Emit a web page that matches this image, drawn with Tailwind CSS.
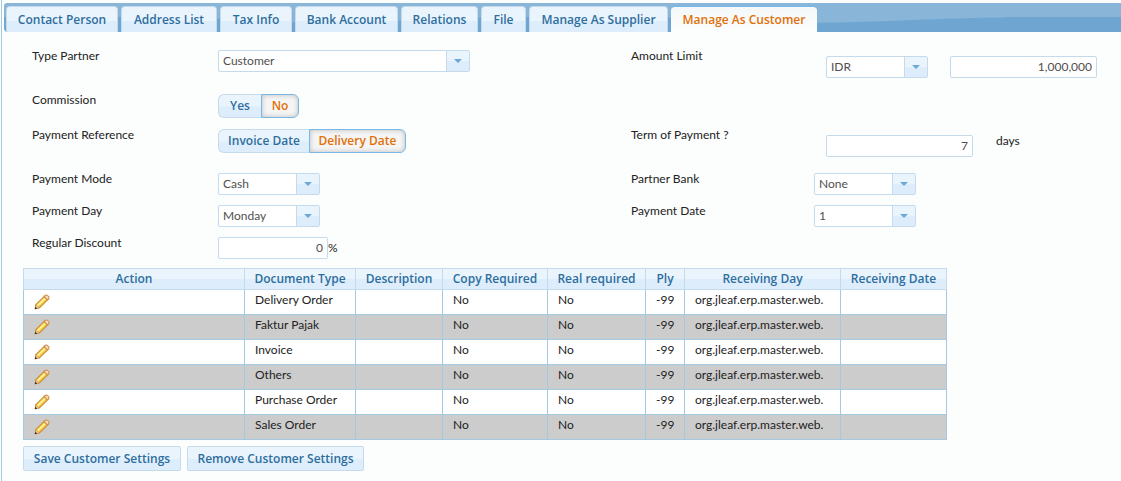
<!DOCTYPE html>
<html lang="en">
<head>
    <meta charset="UTF-8">
    <meta name="viewport" content="width=device-width, initial-scale=1.0">
    <title>Partner - Manage As Customer</title>
    <script src="https://cdn.jsdelivr.net/npm/@tailwindcss/browser@4"></script>
</head>
<body class="bg-[#fcfdfd] pl-px text-[#222222] font-['Lato','Open_Sans',sans-serif] text-xs">
    <!-- Icons -->
    <svg class="hidden" aria-hidden="true">
        <symbol id="pencil" viewBox="0 0 16 16">
            <path d="M.8 15.2L1.2 10.4L10.6 1.2Q12 0 13.4 .8L15.2 2.6Q16 4 14.8 5.4L5.6 14.6Z" fill="#c98a3b"/>
            <path d="M2.3 10.8L10 3.2L12.8 6L5.2 13.6Z" fill="#f3c63a"/>
            <path d="M2.8 11.2L10.3 3.9L11.6 5.2L4.1 12.4Z" fill="#fdf3a0"/>
            <path d="M10.8 2.5L12 1.5Q12.7 1.2 13.4 1.8L14.3 2.7Q15 3.5 14.3 4.3L13.3 5.2Z" fill="#f8d8bc"/>
            <path d="M2 11.3L4.9 13.9L2.2 14.6L1.4 13.8Z" fill="#f0c9a0"/>
            <path d="M.8 15.2L1.1 12.6L3.4 14.8Z" fill="#4a3418"/>
        </symbol>
        <symbol id="caret" viewBox="0 0 8 4">
            <path d="M0 0H8L4 4Z" fill="#6da8d5"/>
        </symbol>
    </svg>

    <div class="min-h-screen border-l border-[#a6c9e2] pl-0.5 pt-[3px]">

        <!-- Tabs -->
        <nav class="relative flex items-end gap-[3px] h-[29px] pl-0.5 bg-[#6ea6d1] rounded-l-sm overflow-hidden font-['Open_Sans',sans-serif] font-semibold text-[#2e6e9e]">
            <svg class="absolute inset-0 w-full h-full" aria-hidden="true">
                <defs>
                    <pattern id="wave" width="500" height="29" patternUnits="userSpaceOnUse">
                        <path d="M0 0H500V14.5C440 15 380 19 300 20C240 14 130 14 50 14H0Z" fill="#88b5d8"/>
                    </pattern>
                </defs>
                <rect width="100%" height="29" fill="url(#wave)"/>
            </svg>
            <a href="#" class="relative h-[26px] w-28 flex items-center justify-center whitespace-nowrap rounded-t border border-b-0 border-[#c5dbec] bg-linear-to-b from-[#eaf4fd] from-55% to-[#ddedfb] to-55%">Contact Person</a>
            <a href="#" class="relative h-[26px] w-24 flex items-center justify-center whitespace-nowrap rounded-t border border-b-0 border-[#c5dbec] bg-linear-to-b from-[#eaf4fd] from-55% to-[#ddedfb] to-55%">Address List</a>
            <a href="#" class="relative h-[26px] w-18 flex items-center justify-center whitespace-nowrap rounded-t border border-b-0 border-[#c5dbec] bg-linear-to-b from-[#eaf4fd] from-55% to-[#ddedfb] to-55%">Tax Info</a>
            <a href="#" class="relative h-[26px] w-[103px] flex items-center justify-center whitespace-nowrap rounded-t border border-b-0 border-[#c5dbec] bg-linear-to-b from-[#eaf4fd] from-55% to-[#ddedfb] to-55%">Bank Account</a>
            <a href="#" class="relative h-[26px] w-[77px] flex items-center justify-center whitespace-nowrap rounded-t border border-b-0 border-[#c5dbec] bg-linear-to-b from-[#eaf4fd] from-55% to-[#ddedfb] to-55%">Relations</a>
            <a href="#" class="relative h-[26px] w-[45px] flex items-center justify-center whitespace-nowrap rounded-t border border-b-0 border-[#c5dbec] bg-linear-to-b from-[#eaf4fd] from-55% to-[#ddedfb] to-55%">File</a>
            <a href="#" class="relative h-[26px] w-[139px] flex items-center justify-center whitespace-nowrap rounded-t border border-b-0 border-[#c5dbec] bg-linear-to-b from-[#eaf4fd] from-55% to-[#ddedfb] to-55%">Manage As Supplier</a>
            <a href="#" aria-current="page" class="relative h-[26px] w-[146px] flex items-center justify-center whitespace-nowrap rounded-t border-t border-[#79b7e7] bg-linear-to-b from-[#f5f8f9] to-[#fcfdfd] text-[#e17009]">Manage As Customer</a>
        </nav>

        <!-- Customer settings -->
        <form class="pt-[18px] pb-2.5">
            <div class="grid grid-cols-[186px_minmax(0,413fr)_183px_minmax(0,307fr)] gap-y-2.5 items-start pl-7 leading-3">
                <label for="typePartner">Type Partner</label>
                <div class="relative w-[252px]">
                    <select id="typePartner" class="appearance-none block w-full h-[22px] pl-1 pr-6 rounded-xs border border-[#c5dbec] bg-white text-[#4f4f4f]">
                        <option>Customer</option>
                    </select>
                    <span class="absolute inset-y-px right-px w-[23px] flex items-center justify-center pointer-events-none border-l border-[#c5dbec] bg-linear-to-b from-[#eaf4fd] from-50% to-[#ddedfb] to-50%"><svg class="w-2 h-1"><use href="#caret"/></svg></span>
                </div>
                <label for="currency">Amount Limit</label>
                <div class="flex gap-[22px] pl-3 py-1.5">
                    <div class="relative w-[102px]">
                        <select id="currency" class="appearance-none block w-full h-[22px] pl-1 pr-6 rounded-xs border border-[#c5dbec] bg-white text-[#4f4f4f]">
                            <option>IDR</option>
                        </select>
                        <span class="absolute inset-y-px right-px w-[23px] flex items-center justify-center pointer-events-none border-l border-[#c5dbec] bg-linear-to-b from-[#eaf4fd] from-50% to-[#ddedfb] to-50%"><svg class="w-2 h-1"><use href="#caret"/></svg></span>
                    </div>
                    <input type="text" aria-label="Amount" value="1,000,000" class="w-[147px] h-[22px] px-1 pb-0.5 text-right rounded-xs border border-[#c5dbec] bg-white text-[#4f4f4f]">
                </div>

                <span id="commission">Commission</span>
                <div role="group" aria-labelledby="commission" class="col-span-3 flex h-[25px] font-['Open_Sans',sans-serif] font-semibold">
                    <button type="button" aria-pressed="false" class="w-[43px] h-6 rounded-l-md border border-r-0 border-[#c5dbec] bg-linear-to-b from-[#eaf4fd] from-50% to-[#ddedfb] to-55% text-[#2e6e9e]">Yes</button>
                    <button type="button" aria-pressed="true" class="w-[38px] h-6 rounded-r-md border border-[#79b7e7] bg-[#f5f5f5] inset-shadow-[0_0_5px_#bbbbbb] text-[#e17009]">No</button>
                </div>

                <span id="reference">Payment Reference</span>
                <div role="group" aria-labelledby="reference" class="flex font-['Open_Sans',sans-serif] font-semibold whitespace-nowrap">
                    <button type="button" aria-pressed="false" class="w-[91px] h-6 rounded-l-md border border-r-0 border-[#c5dbec] bg-linear-to-b from-[#eaf4fd] from-50% to-[#ddedfb] to-55% text-[#2e6e9e]">Invoice Date</button>
                    <button type="button" aria-pressed="true" class="w-[97px] h-6 rounded-r-md border border-[#79b7e7] bg-[#f5f5f5] inset-shadow-[0_0_5px_#bbbbbb] text-[#e17009]">Delivery Date</button>
                </div>
                <label for="term">Term of Payment ?</label>
                <div class="flex gap-[23px] pl-3 py-1.5">
                    <input id="term" type="text" value="7" class="w-[147px] h-[22px] px-1 pb-0.5 text-right rounded-xs border border-[#c5dbec] bg-white text-[#4f4f4f]">
                    <span>days</span>
                </div>

                <label for="mode">Payment Mode</label>
                <div class="relative w-[102px]">
                    <select id="mode" class="appearance-none block w-full h-[22px] pl-1 pr-6 rounded-xs border border-[#c5dbec] bg-white text-[#4f4f4f]">
                        <option>Cash</option>
                    </select>
                    <span class="absolute inset-y-px right-px w-[23px] flex items-center justify-center pointer-events-none border-l border-[#c5dbec] bg-linear-to-b from-[#eaf4fd] from-50% to-[#ddedfb] to-50%"><svg class="w-2 h-1"><use href="#caret"/></svg></span>
                </div>
                <label for="bank">Partner Bank</label>
                <div class="relative w-[102px]">
                    <select id="bank" class="appearance-none block w-full h-[22px] pl-1 pr-6 rounded-xs border border-[#c5dbec] bg-white text-[#4f4f4f]">
                        <option>None</option>
                    </select>
                    <span class="absolute inset-y-px right-px w-[23px] flex items-center justify-center pointer-events-none border-l border-[#c5dbec] bg-linear-to-b from-[#eaf4fd] from-50% to-[#ddedfb] to-50%"><svg class="w-2 h-1"><use href="#caret"/></svg></span>
                </div>

                <label for="day">Payment Day</label>
                <div class="relative w-[102px]">
                    <select id="day" class="appearance-none block w-full h-[22px] pl-1 pr-6 rounded-xs border border-[#c5dbec] bg-white text-[#4f4f4f]">
                        <option>Monday</option>
                    </select>
                    <span class="absolute inset-y-px right-px w-[23px] flex items-center justify-center pointer-events-none border-l border-[#c5dbec] bg-linear-to-b from-[#eaf4fd] from-50% to-[#ddedfb] to-50%"><svg class="w-2 h-1"><use href="#caret"/></svg></span>
                </div>
                <label for="date">Payment Date</label>
                <div class="relative w-[102px]">
                    <select id="date" class="appearance-none block w-full h-[22px] pl-1 pr-6 rounded-xs border border-[#c5dbec] bg-white text-[#4f4f4f]">
                        <option>1</option>
                    </select>
                    <span class="absolute inset-y-px right-px w-[23px] flex items-center justify-center pointer-events-none border-l border-[#c5dbec] bg-linear-to-b from-[#eaf4fd] from-50% to-[#ddedfb] to-50%"><svg class="w-2 h-1"><use href="#caret"/></svg></span>
                </div>

                <label for="discount">Regular Discount</label>
                <div class="flex items-center">
                    <input id="discount" type="text" value="0" class="w-[110px] h-[22px] px-1 pb-0.5 text-right rounded-xs border border-[#c5dbec] bg-white text-[#4f4f4f]">
                    <span>%</span>
                </div>
            </div>

            <!-- Documents -->
            <table class="mt-[9px] ml-[19px] w-[924px] table-fixed border-collapse text-left leading-3">
                <colgroup>
                    <col class="w-[221px]"><col class="w-[111px]"><col class="w-[87px]"><col class="w-[105px]">
                    <col class="w-[98px]"><col class="w-[39px]"><col class="w-[156px]"><col class="w-[106px]">
                </colgroup>
                <thead class="font-['Open_Sans',sans-serif] text-[#2e6e9e] whitespace-nowrap">
                    <tr class="h-[21px] text-center bg-linear-to-b from-[#eaf4fd] from-50% to-[#ddedfb] to-50%">
                        <th class="border border-[#c5dbec] font-semibold">Action</th>
                        <th class="border border-[#c5dbec] font-semibold">Document Type</th>
                        <th class="border border-[#c5dbec] font-semibold">Description</th>
                        <th class="border border-[#c5dbec] font-semibold">Copy Required</th>
                        <th class="border border-[#c5dbec] font-semibold">Real required</th>
                        <th class="border border-[#c5dbec] font-semibold">Ply</th>
                        <th class="border border-[#c5dbec] font-semibold">Receiving Day</th>
                        <th class="border border-[#c5dbec] font-semibold">Receiving Date</th>
                    </tr>
                </thead>
                <tbody id="documents"></tbody>
            </table>

            <div class="flex gap-1.5 mt-1.5 ml-[19px] font-['Open_Sans',sans-serif] font-semibold text-[#2e6e9e]">
                <button type="button" class="w-[158px] h-[25px] rounded-xs border border-[#c5dbec] bg-linear-to-b from-[#eaf4fd] from-50% to-[#ddedfb] to-55%">Save Customer Settings</button>
                <button type="button" class="w-[177px] h-[25px] rounded-xs border border-[#c5dbec] bg-linear-to-b from-[#eaf4fd] from-50% to-[#ddedfb] to-55%">Remove Customer Settings</button>
            </div>
        </form>
    </div>

    <script>
        const documents = ['Delivery Order', 'Faktur Pajak', 'Invoice', 'Others', 'Purchase Order', 'Sales Order'];

        document.getElementById('documents').innerHTML = documents.map(name => `
            <tr class="h-[25px] align-top bg-white even:bg-[#cccccc]">
                <td class="border border-[#a6c9e2] pl-2.5 pt-1"><button type="button" aria-label="Edit ${name}" class="block"><svg class="block size-4"><use href="#pencil"/></svg></button></td>
                <td class="border border-[#a6c9e2] pl-2.5 pt-1">${name}</td>
                <td class="border border-[#a6c9e2]"></td>
                <td class="border border-[#a6c9e2] pl-2.5 pt-1">No</td>
                <td class="border border-[#a6c9e2] pl-2.5 pt-1">No</td>
                <td class="border border-[#a6c9e2] pl-2.5 pt-1">-99</td>
                <td class="border border-[#a6c9e2] pl-2.5 pt-1">org.jleaf.erp.master.web.</td>
                <td class="border border-[#a6c9e2]"></td>
            </tr>
        `).join('');
    </script>
</body>
</html>
